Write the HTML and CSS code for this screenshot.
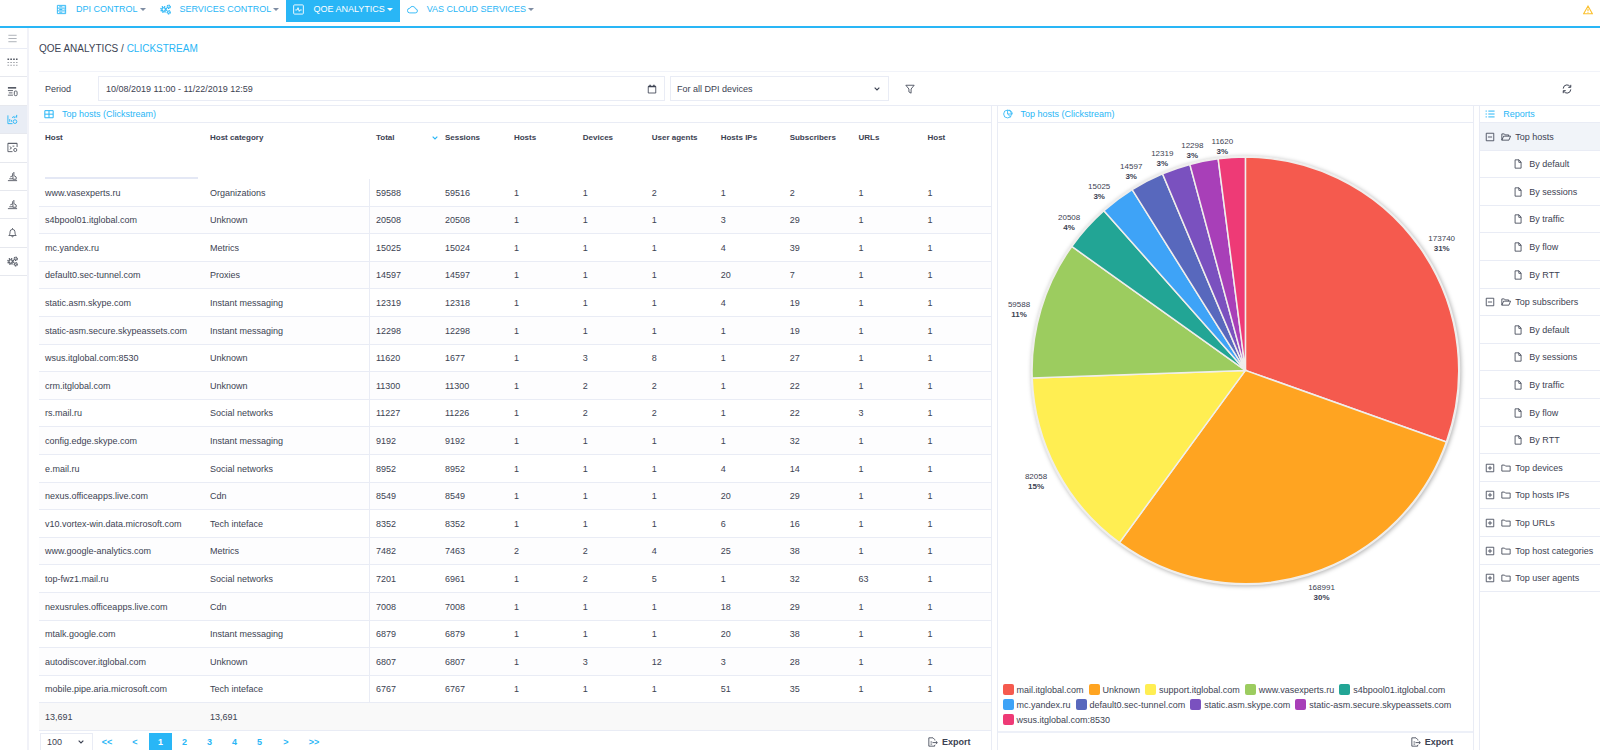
FILE: index.html
```html
<!DOCTYPE html>
<html lang="en">
<head>
<meta charset="utf-8">
<title>QoE Analytics / Clickstream</title>
<link rel="stylesheet" href="styles.css">
</head>
<body>
<svg class="sprite" aria-hidden="true">
  <symbol id="i-server" viewBox="0 0 12 12"><path d="M1.500 1.500h9v9h-9zM1.500 4.500h9M1.500 7.500h9M3.500 3h3.500M3.500 6h3.500M3.500 9h3.500M8.500 3h.8M8.500 6h.8M8.500 9h.8"/></symbol>
  <symbol id="i-gears" viewBox="0 0 12 12"><circle cx="4" cy="6" r="3" stroke-width="1.600" stroke-dasharray="1.400 .95"/><circle cx="4" cy="6" r="1.900" stroke-width="1.300"/><circle cx="9.500" cy="3" r="1.500" stroke-width="1.700" stroke-dasharray="1.200 .37"/><circle cx="9.500" cy="9" r="1.500" stroke-width="1.700" stroke-dasharray="1.200 .37"/></symbol>
  <symbol id="i-pulse" viewBox="0 0 12 12"><rect x=".7" y="1" width="10.600" height="10" rx="1"/><path d="M2.500 6.500h2l1-2.500 1.300 4 1-1.500h1.700"/></symbol>
  <symbol id="i-cloud" viewBox="0 0 12 12"><path d="M3 9.700h6a2.200 2.200 0 0 0 .3-4.400A3.300 3.300 0 0 0 3 4.700 2.500 2.500 0 0 0 3 9.700z"/></symbol>
  <symbol id="i-warn" viewBox="0 0 12 12"><path d="M6 1.300 11.200 10.500H.8zM6 4.500v3M6 8.300v1" stroke-width="1.300"/></symbol>
  <symbol id="i-menu" viewBox="0 0 12 12"><path d="M1.500 2.500h9M1.500 6h9M1.500 9.500h9"/></symbol>
  <symbol id="i-dots" viewBox="0 0 12 12"><path stroke-width="1.800" stroke-dasharray="1.800 1.300" d="M.5 2.500h11"/><path stroke-dasharray="1.800 1.300" d="M.5 6h11M.5 9h11" opacity=".6"/></symbol>
  <symbol id="i-lines" viewBox="0 0 12 12"><path d="M1 2h9" stroke-width="1.800"/><path d="M1 5h5.500M2 7.500h4M1 10h5.500"/><rect x="8" y="5.500" width="3" height="5" rx="1"/></symbol>
  <symbol id="i-chart" viewBox="0 0 12 12"><path d="M1 1.500v9h5M3 8.500v-3M5 8.500v-2M5.500 4 8 2.500"/><circle cx="8.700" cy="8.300" r="2"/><path d="M8 4.500V3M8.700 4l2-2M10.500 1v3"/></symbol>
  <symbol id="i-panel" viewBox="0 0 12 12"><path d="M6 10.500H1v-9h10v4M1 1.500h10M3 5l2 1.500L3 8M6 4.500h2"/><circle cx="9" cy="8.700" r="1.700"/></symbol>
  <symbol id="i-stack" viewBox="0 0 12 12"><path d="M1 10.500h10M2.500 8.500h4M3.500 6.500l3-1.500M6 3l1.500-1.500v3.500l2.500 1.500v2.500H6.500V6.500z"/></symbol>
  <symbol id="i-bell" viewBox="0 0 12 12"><path d="M2 9.300c1.300-1 1.200-2.300 1.300-4a2.700 2.700 0 0 1 5.400 0c.1 1.700 0 3 1.300 4zM5 9.800c.3 1.300 1.700 1.300 2 0M6 1.200v1.300"/></symbol>
  <symbol id="i-calendar" viewBox="0 0 12 12"><path d="M1.500 3h9v7.800h-9z"/><path d="M1.500 3h9M3.700 1v2M8.300 1v2" stroke-width="1.700"/></symbol>
  <symbol id="i-chevron" viewBox="0 0 12 12"><path d="M2.500 4 6 7.500 9.500 4" stroke-width="1.700"/></symbol>
  <symbol id="i-filter" viewBox="0 0 12 12"><path d="M1 1.500h10L7.300 6v5L4.700 9.500V6z"/></symbol>
  <symbol id="i-refresh" viewBox="0 0 12 12"><path d="M1.500 5.500A4.500 4.500 0 0 1 10 3.500M10.500 6.500A4.500 4.500 0 0 1 2 8.500M10.500 1v3h-3M1.500 11V8h3" stroke-width="1.200"/></symbol>
  <symbol id="i-grid" viewBox="0 0 12 12"><path d="M1 2h10v8.500H1zM1 6.200h10M6 2v8.500" stroke-width="1.200"/></symbol>
  <symbol id="i-pie" viewBox="0 0 12 12"><circle cx="5.500" cy="6" r="4.700"/><path d="M5.500 1.300V6h4.700M7 1.300c2.500.5 4 2.200 4.200 5M5.500 6l3.500 3.500"/></symbol>
  <symbol id="i-list" viewBox="0 0 12 12"><path d="M.7 2.500h1.500M.7 6h1.500M.7 9.500h1.500M4 2.500h7.500M4 6h7.500M4 9.500h7.500" stroke-width="1.200"/></symbol>
  <symbol id="i-minus" viewBox="0 0 12 12"><path d="M1.500 1.500h9v9h-9zM3.500 6h5"/></symbol>
  <symbol id="i-plus" viewBox="0 0 12 12"><path d="M1.500 1.500h9v9h-9zM3.500 6h5M6 3.500v5"/></symbol>
  <symbol id="i-open" viewBox="0 0 12 12"><path d="M1 9.800V2.300h3l1 1.200h4.200V5M1 9.800 3.200 5h8.300L9.500 9.800z"/></symbol>
  <symbol id="i-folder" viewBox="0 0 12 12"><path d="M1 2.500h3.200l1.200 1.200H11v6H1z"/></symbol>
  <symbol id="i-file" viewBox="0 0 12 12"><path d="M2.500 1h4.700L9.700 3.700V11H2.500zM7 1v3h2.700"/></symbol>
  <symbol id="i-export" viewBox="0 0 12 12"><path d="M8 4V3L6 1H1v10h7V9.500M3 6h2M3 8.500h2M5.500 6.700H11M9.300 4.900l1.900 1.800-1.900 1.800"/></symbol>
</svg>

<header class="topbar">
  <nav class="topnav" aria-label="Sections">
    <a class="topnav-item" href="#"><svg class="icon"><use href="#i-server"/></svg><span class="topnav-text">DPI CONTROL</span><span class="caret"></span></a>
    <a class="topnav-item" href="#"><svg class="icon"><use href="#i-gears"/></svg><span class="topnav-text">SERVICES CONTROL</span><span class="caret"></span></a>
    <a class="topnav-item active" href="#"><svg class="icon"><use href="#i-pulse"/></svg><span class="topnav-text">QOE ANALYTICS</span><span class="caret"></span></a>
    <a class="topnav-item" href="#"><svg class="icon"><use href="#i-cloud"/></svg><span class="topnav-text">VAS CLOUD SERVICES</span><span class="caret"></span></a>
  </nav>
  <button class="icon-button warning" aria-label="Warnings"><svg class="icon"><use href="#i-warn"/></svg></button>
</header>

<div class="shell">
  <aside class="sidebar">
    <button class="side-toggle" aria-label="Menu"><svg class="icon"><use href="#i-menu"/></svg></button>
    <nav class="side-list" aria-label="Tools">
      <a href="#" aria-label="Dashboard"><svg class="icon"><use href="#i-dots"/></svg></a>
      <a href="#" aria-label="Netflow"><svg class="icon"><use href="#i-lines"/></svg></a>
      <a class="active" href="#" aria-label="Clickstream"><svg class="icon"><use href="#i-chart"/></svg></a>
      <a href="#" aria-label="Online reports"><svg class="icon"><use href="#i-panel"/></svg></a>
      <a href="#" aria-label="Subscribers"><svg class="icon"><use href="#i-stack"/></svg></a>
      <a href="#" aria-label="Hosts"><svg class="icon"><use href="#i-stack"/></svg></a>
      <a href="#" aria-label="Alerts"><svg class="icon"><use href="#i-bell"/></svg></a>
      <a href="#" aria-label="Settings"><svg class="icon"><use href="#i-gears"/></svg></a>
    </nav>
  </aside>

  <main class="main">
    <h1 class="title">QOE ANALYTICS / <a href="#">CLICKSTREAM</a></h1>

    <form class="filters">
      <label class="filters-label" for="period">Period</label>
      <div class="field field-period"><input id="period" type="text" value="10/08/2019 11:00 - 11/22/2019 12:59"><svg class="icon"><use href="#i-calendar"/></svg></div>
      <div class="field field-device"><select aria-label="Device"><option>For all DPI devices</option></select><svg class="icon chevron"><use href="#i-chevron"/></svg></div>
      <button class="icon-button filter-button" type="button" aria-label="Filter"><svg class="icon"><use href="#i-filter"/></svg></button>
      <button class="icon-button refresh-button" type="button" aria-label="Refresh"><svg class="icon"><use href="#i-refresh"/></svg></button>
    </form>

    <div class="panels">
      <section class="panel panel-table">
        <h2 class="panel-title"><svg class="icon"><use href="#i-grid"/></svg>Top hosts (Clickstream)</h2>
        <div class="panel-body">
          <table class="hosts">
            <colgroup><col class="col-host"><col class="col-category"><col><col><col><col><col><col><col><col><col></colgroup>
            <thead>
              <tr><th>Host</th><th>Host category</th><th class="sorted"><span class="sorted-label">Total<svg class="icon chevron"><use href="#i-chevron"/></svg></span></th><th>Sessions</th><th>Hosts</th><th>Devices</th><th>User agents</th><th>Hosts IPs</th><th>Subscribers</th><th>URLs</th><th>Host</th></tr>
              <tr class="filter-row"><td><input class="host-filter" type="text" aria-label="Filter by host"></td><td colspan="10"></td></tr>
            </thead>
            <tbody id="rows"></tbody>
            <tfoot><tr><td>13,691</td><td>13,691</td><td colspan="9"></td></tr></tfoot>
          </table>
        </div>
        <div class="panel-foot">
          <div class="field page-size"><select aria-label="Rows per page"><option>100</option></select><svg class="icon chevron"><use href="#i-chevron"/></svg></div>
          <nav class="pages" aria-label="Pages"><a class="step" href="#">&lt;&lt;</a><a class="step" href="#">&lt;</a><a class="active" href="#">1</a><a href="#">2</a><a href="#">3</a><a href="#">4</a><a href="#">5</a><a class="step" href="#">&gt;</a><a class="step" href="#">&gt;&gt;</a></nav>
          <button class="export"><svg class="icon"><use href="#i-export"/></svg>Export</button>
        </div>
      </section>

      <div class="splitter"></div>

      <section class="panel panel-chart">
        <h2 class="panel-title"><svg class="icon"><use href="#i-pie"/></svg>Top hosts (Clickstream)</h2>
        <div class="panel-body">
          <svg class="pie" id="pie" viewBox="0 0 475 500" preserveAspectRatio="xMidYMin" role="img" aria-label="Top hosts by total"></svg>
          <ul class="legend" id="legend"></ul>
        </div>
        <div class="panel-foot"><button class="export"><svg class="icon"><use href="#i-export"/></svg>Export</button></div>
      </section>

      <div class="splitter"></div>

      <section class="panel panel-reports">
        <h2 class="panel-title"><svg class="icon"><use href="#i-list"/></svg>Reports</h2>
        <div class="tree" id="tree"></div>
      </section>
    </div>
  </main>
</div>
<script src="app.js"></script>
</body>
</html>
```
FILE: styles.css
```css
* { box-sizing: border-box; }

:root {
  --blue: #29b6f6;
  --text: #3c4252;
  --line: #e9ecf5;
}

body {
  margin: 0;
  height: 100vh;
  display: flex;
  flex-direction: column;
  overflow: hidden;
  background: #fff;
  color: var(--text);
  font: 9px/12px "Liberation Sans", Arial, sans-serif;
}

a { color: var(--blue); text-decoration: none; }
button, input, select { font: inherit; color: inherit; }
button { padding: 0; border: 0; background: none; }

.sprite { display: none; }
.icon { flex: none; width: 10px; height: 10px; fill: none; stroke: currentColor; stroke-width: 1; }
.chevron { width: 8px; height: 8px; }
.icon-button { display: flex; align-items: center; }

.topbar {
  flex: none;
  display: flex;
  justify-content: space-between;
  height: 28px;
  padding: 0 7px 0 49px;
  border-bottom: 2px solid var(--blue);
}
.topnav { display: flex; height: 22px; }
.topnav-item { display: flex; align-items: center; padding: 0 7px 4px; }
.topnav-item .icon { width: 11px; height: 11px; }
.topnav-text { padding: 0 2px 0 9px; }
.topnav-item.active { background: var(--blue); color: #fff; }
.caret { border: 3px solid transparent; border-top-color: #7f8da3; border-bottom: 0; }
.active .caret { border-top-color: #fff; }
.warning { height: 20px; color: #fbc02d; }

.shell { flex: 1; display: flex; min-height: 0; }

.sidebar { flex: none; width: 29px; border-right: 2px solid #f1f2f8; }
.sidebar .icon { width: 11px; height: 11px; }
.side-toggle {
  display: flex;
  align-items: center;
  justify-content: center;
  width: 100%;
  height: 21px;
  padding-right: 2px;
  color: #a7acb4;
  border-bottom: 1px solid var(--line);
}
.side-list { display: flex; flex-direction: column; height: 227px; }
.side-list a {
  flex: 1;
  display: flex;
  align-items: center;
  justify-content: center;
  padding-right: 2px;
  color: #565b66;
  border-bottom: 1px solid #e6e8ee;
}
.side-list a.active { background: #e9edf5; color: var(--blue); }

.main { flex: 1; min-width: 0; display: flex; flex-direction: column; padding-left: 10px; }

.title { margin: 0; padding: 13px 0 14px; font-size: 10px; line-height: 16px; font-weight: normal; border-bottom: 1px solid #f1f3f9; }

.filters { display: flex; align-items: center; height: 33px; padding-left: 6px; }
.filters-label { width: 53px; }
.field { position: relative; display: flex; align-items: center; height: 25px; border: 1px solid var(--line); }
.field input, .field select {
  width: 100%;
  height: 100%;
  padding: 0 6px;
  border: 0;
  background: none;
  appearance: none;
  outline: 0;
}
.field input { padding-left: 7px; }
.field .icon { position: absolute; right: 7px; pointer-events: none; }
.field-period { flex: 0 1 567px; margin-right: 5px; }
.field-device { flex: 0 1 219px; }
.filter-button { margin-left: 16px; }
.refresh-button { margin-left: auto; margin-right: 28px; }

.panels { flex: 1; display: flex; min-height: 0; border-top: 1px solid var(--line); }
.panel { display: flex; flex-direction: column; min-width: 0; }
.panel-table { flex: 954 1 0; border-right: 1px solid var(--line); }
.panel-chart { flex: 477 1 0; border: solid var(--line); border-width: 0 1px; }
.panel-reports { flex: 120 1 0; border-left: 1px solid var(--line); }
.panel-title {
  flex: none;
  display: flex;
  align-items: center;
  gap: 8px;
  height: 17px;
  margin: 0;
  padding-left: 5px;
  font-size: 9px;
  font-weight: normal;
  color: var(--blue);
  border-bottom: 1px solid var(--line);
}
.panel-body { flex: 1; display: flex; flex-direction: column; min-height: 0; overflow: hidden; }
.splitter {
  flex: none;
  align-self: center;
  width: 5px;
  height: 17px;
  background: radial-gradient(circle, #c3cbe4 30%, transparent 50%) 1px 0 / 2px 2px;
}

.hosts { width: 100%; table-layout: fixed; border-collapse: separate; border-spacing: 0; }
.hosts .col-host { width: 165px; }
.hosts .col-category { width: 166px; }
.hosts th, .hosts td { padding: 0 6px; text-align: left; white-space: nowrap; }
.hosts th { height: 29px; font-size: 8px; font-weight: bold; }
.hosts .sorted { padding-right: 0; }
.sorted-label { display: flex; justify-content: space-between; align-items: center; }
.sorted .chevron { color: var(--blue); }
.filter-row td { height: 27px; vertical-align: top; }
.host-filter { display: block; width: 100%; height: 27px; border: 0; border-bottom: 2px solid #e4e8f5; outline: 0; background: none; }
.hosts tbody td { height: 28px; border-bottom: 1px solid var(--line); }
.hosts tbody tr:nth-child(5n+2) td, .hosts tbody tr:nth-child(5n+4) td { height: 27px; }
.hosts tbody tr:nth-child(even) { background: #fdfdfe; }
.hosts tbody td:nth-child(2) { border-right: 1px solid var(--line); }
.hosts tfoot td { height: 28px; background: #f9f9f9; border-bottom: 1px solid var(--line); }

.panel-foot { flex: none; display: flex; justify-content: space-between; height: 19px; padding: 2px 20px 0 1px; }
.page-size { width: 53px; border-bottom: 0; height: 17px; }
.page-size + .pages { flex: 1; }
.pages { display: flex; font-weight: bold; }
.pages a { width: 25px; line-height: 18px; text-align: center; }
.pages .step { width: 28px; }
.pages .active { width: 23px; background: var(--blue); color: #fff; }
.export { display: flex; align-items: center; gap: 4px; margin-left: auto; font-weight: bold; }

.pie { display: block; width: 100%; flex: 1; min-height: 0; overflow: visible; }
.pie text { font-size: 8px; text-anchor: middle; fill: var(--text); }
.pie .share { font-weight: bold; }
.slice { stroke: #f0eeec; stroke-width: 1.500; }
.pie-disc { fill: #fff; stroke: #eee; stroke-width: 3; filter: drop-shadow(1px 1px 2px rgba(0, 0, 0, .3)); }
.panel-chart .panel-foot { border-top: 2px solid #edf0f8; padding-top: 0; }

.legend { flex: none; display: flex; flex-wrap: wrap; column-gap: 5px; margin: 0; padding: 0 5px 4px; list-style: none; }
.legend li { display: flex; align-items: center; gap: 3px; height: 15px; }
.swatch { width: 11px; height: 11px; border-radius: 2px; }

.tree-row { display: flex; align-items: center; height: 28px; padding-left: 5px; color: var(--text); border-bottom: 1px solid var(--line); white-space: nowrap; }
.tree-row:nth-child(5n+2), .tree-row:nth-child(5n+4) { height: 27px; }
.tree-row .icon + .icon { margin-left: 6px; }
.tree-row span { padding-left: 4px; }
.tree-row.child { padding-left: 33px; }
.tree-row.child span { padding-left: 6px; }
.tree-row.selected { background: #f1f4f9; }
```
FILE: app.js
```js
const rows = [
  ["www.vasexperts.ru", "Organizations", 59588, 59516, 1, 1, 2, 1, 2, 1, 1],
  ["s4bpool01.itglobal.com", "Unknown", 20508, 20508, 1, 1, 1, 3, 29, 1, 1],
  ["mc.yandex.ru", "Metrics", 15025, 15024, 1, 1, 1, 4, 39, 1, 1],
  ["default0.sec-tunnel.com", "Proxies", 14597, 14597, 1, 1, 1, 20, 7, 1, 1],
  ["static.asm.skype.com", "Instant messaging", 12319, 12318, 1, 1, 1, 4, 19, 1, 1],
  ["static-asm.secure.skypeassets.com", "Instant messaging", 12298, 12298, 1, 1, 1, 1, 19, 1, 1],
  ["wsus.itglobal.com:8530", "Unknown", 11620, 1677, 1, 3, 8, 1, 27, 1, 1],
  ["crm.itglobal.com", "Unknown", 11300, 11300, 1, 2, 2, 1, 22, 1, 1],
  ["rs.mail.ru", "Social networks", 11227, 11226, 1, 2, 2, 1, 22, 3, 1],
  ["config.edge.skype.com", "Instant messaging", 9192, 9192, 1, 1, 1, 1, 32, 1, 1],
  ["e.mail.ru", "Social networks", 8952, 8952, 1, 1, 1, 4, 14, 1, 1],
  ["nexus.officeapps.live.com", "Cdn", 8549, 8549, 1, 1, 1, 20, 29, 1, 1],
  ["v10.vortex-win.data.microsoft.com", "Tech inteface", 8352, 8352, 1, 1, 1, 6, 16, 1, 1],
  ["www.google-analytics.com", "Metrics", 7482, 7463, 2, 2, 4, 25, 38, 1, 1],
  ["top-fwz1.mail.ru", "Social networks", 7201, 6961, 1, 2, 5, 1, 32, 63, 1],
  ["nexusrules.officeapps.live.com", "Cdn", 7008, 7008, 1, 1, 1, 18, 29, 1, 1],
  ["mtalk.google.com", "Instant messaging", 6879, 6879, 1, 1, 1, 20, 38, 1, 1],
  ["autodiscover.itglobal.com", "Unknown", 6807, 6807, 1, 3, 12, 3, 28, 1, 1],
  ["mobile.pipe.aria.microsoft.com", "Tech inteface", 6767, 6767, 1, 1, 1, 51, 35, 1, 1]
];
document.getElementById("rows").innerHTML = rows
  .map(r => "<tr>" + r.map(c => `<td>${c}</td>`).join("") + "</tr>").join("");

// name, value, share, colour, label centre x, label baseline y
const slices = [
  ["mail.itglobal.com", 173740, 31, "#f55a4e", 443, 118],
  ["Unknown", 168991, 30, "#ffa421", 323, 466],
  ["support.itglobal.com", 82058, 15, "#ffee52", 38, 355],
  ["www.vasexperts.ru", 59588, 11, "#9ccc5f", 21, 184],
  ["s4bpool01.itglobal.com", 20508, 4, "#22a595", 71, 97],
  ["mc.yandex.ru", 15025, 3, "#3ea3f7", 101, 66],
  ["default0.sec-tunnel.com", 14597, 3, "#5868bd", 133, 46],
  ["static.asm.skype.com", 12319, 3, "#7a51bf", 164, 33],
  ["static-asm.secure.skypeassets.com", 12298, 3, "#a83fb8", 194, 25],
  ["wsus.itglobal.com:8530", 11620, 3, "#ee3a76", 224, 21]
];
const cx = 247, cy = 247, r = 213;
const total = slices.reduce((sum, s) => sum + s[1], 0);
const point = a => `${(cx + r * Math.sin(a)).toFixed(2)} ${(cy - r * Math.cos(a)).toFixed(2)}`;
let angle = 0;
let pie = `<circle class="pie-disc" cx="${cx}" cy="${cy}" r="${r}"/>`;
let labels = "";
for (const [, value, share, colour, x, y] of slices) {
  const end = angle + value / total * 2 * Math.PI;
  pie += `<path class="slice" fill="${colour}" d="M${cx} ${cy}L${point(angle)}A${r} ${r} 0 0 1 ${point(end)}Z"/>`;
  labels += `<text x="${x}" y="${y}">${value}</text><text class="share" x="${x}" y="${y + 10}">${share}%</text>`;
  angle = end;
}
document.getElementById("pie").innerHTML = pie + labels;
document.getElementById("legend").innerHTML = slices
  .map(s => `<li><span class="swatch" style="background:${s[3]}"></span>${s[0]}</li>`).join("");

const kinds = ["By default", "By sessions", "By traffic", "By flow", "By RTT"];
const tree = [["Top hosts", kinds], ["Top subscribers", kinds], ["Top devices"], ["Top hosts IPs"], ["Top URLs"], ["Top host categories"], ["Top user agents"]];
const icon = id => `<svg class="icon"><use href="#i-${id}"/></svg>`;
document.getElementById("tree").innerHTML = tree.map(([name, children], i) =>
  `<a href="#" class="tree-row${i ? "" : " selected"}">${icon(children ? "minus" : "plus")}${icon(children ? "open" : "folder")}<span>${name}</span></a>` +
  (children || []).map(c => `<a href="#" class="tree-row child">${icon("file")}<span>${c}</span></a>`).join("")
).join("");
```
